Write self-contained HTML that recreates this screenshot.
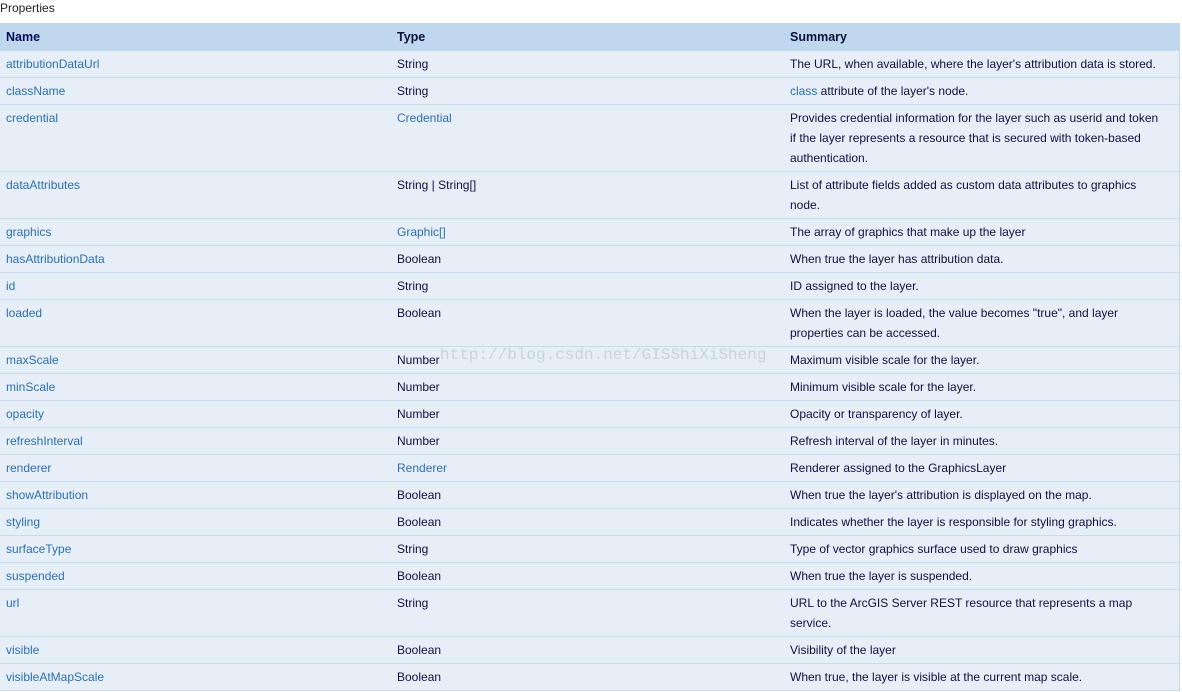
<!DOCTYPE html>
<html><head><meta charset="utf-8"><style>
body{margin:0;background:#fff;font-family:"Liberation Sans",Arial,sans-serif;font-size:12px;width:1182px;height:692px;overflow:hidden;position:relative}
.t{position:absolute;left:0;top:1px;font-size:12px;color:#222}
.tb{position:absolute;left:0;top:23px;width:1179px;border-right:1px solid #c8d6e4}
.r{position:relative;background:#e6eef8;border-bottom:1px solid #cbd9e8;box-sizing:border-box}
.r div{position:absolute;top:3px;line-height:20px;white-space:nowrap}
.h{background:#c0d8ee;height:28px;font-weight:bold;color:#0a0a5a;font-size:12.5px}
.h div{top:4px}
.a{left:6px;color:#2e6fae}
.b{left:397px;color:#10103c}
.b.l{color:#2e6fae}
.c{left:790px;color:#10103c}
.wm{position:absolute;left:440px;top:346px;font-family:"Liberation Mono",monospace;font-size:16px;color:rgba(150,160,175,0.35)}
</style></head><body>
<div class="t">Properties</div>
<div class="tb">
<div class="r h"><div class="a" style="color:#0a0a5a">Name</div><div class="b">Type</div><div class="c">Summary</div></div>
<div class="r" style="height:27px"><div class="a">attributionDataUrl</div><div class="b">String</div><div class="c">The URL, when available, where the layer's attribution data is stored.</div></div>
<div class="r" style="height:27px"><div class="a">className</div><div class="b">String</div><div class="c"><span style="color:#2e6fae">class</span> attribute of the layer's node.</div></div>
<div class="r" style="height:67px"><div class="a">credential</div><div class="b l">Credential</div><div class="c">Provides credential information for the layer such as userid and token<br>if the layer represents a resource that is secured with token-based<br>authentication.</div></div>
<div class="r" style="height:47px"><div class="a">dataAttributes</div><div class="b">String | String[]</div><div class="c">List of attribute fields added as custom data attributes to graphics<br>node.</div></div>
<div class="r" style="height:27px"><div class="a">graphics</div><div class="b l">Graphic[]</div><div class="c">The array of graphics that make up the layer</div></div>
<div class="r" style="height:27px"><div class="a">hasAttributionData</div><div class="b">Boolean</div><div class="c">When true the layer has attribution data.</div></div>
<div class="r" style="height:27px"><div class="a">id</div><div class="b">String</div><div class="c">ID assigned to the layer.</div></div>
<div class="r" style="height:47px"><div class="a">loaded</div><div class="b">Boolean</div><div class="c">When the layer is loaded, the value becomes "true", and layer<br>properties can be accessed.</div></div>
<div class="r" style="height:27px"><div class="a">maxScale</div><div class="b">Number</div><div class="c">Maximum visible scale for the layer.</div></div>
<div class="r" style="height:27px"><div class="a">minScale</div><div class="b">Number</div><div class="c">Minimum visible scale for the layer.</div></div>
<div class="r" style="height:27px"><div class="a">opacity</div><div class="b">Number</div><div class="c">Opacity or transparency of layer.</div></div>
<div class="r" style="height:27px"><div class="a">refreshInterval</div><div class="b">Number</div><div class="c">Refresh interval of the layer in minutes.</div></div>
<div class="r" style="height:27px"><div class="a">renderer</div><div class="b l">Renderer</div><div class="c">Renderer assigned to the GraphicsLayer</div></div>
<div class="r" style="height:27px"><div class="a">showAttribution</div><div class="b">Boolean</div><div class="c">When true the layer's attribution is displayed on the map.</div></div>
<div class="r" style="height:27px"><div class="a">styling</div><div class="b">Boolean</div><div class="c">Indicates whether the layer is responsible for styling graphics.</div></div>
<div class="r" style="height:27px"><div class="a">surfaceType</div><div class="b">String</div><div class="c">Type of vector graphics surface used to draw graphics</div></div>
<div class="r" style="height:27px"><div class="a">suspended</div><div class="b">Boolean</div><div class="c">When true the layer is suspended.</div></div>
<div class="r" style="height:47px"><div class="a">url</div><div class="b">String</div><div class="c">URL to the ArcGIS Server REST resource that represents a map<br>service.</div></div>
<div class="r" style="height:27px"><div class="a">visible</div><div class="b">Boolean</div><div class="c">Visibility of the layer</div></div>
<div class="r" style="height:27px"><div class="a">visibleAtMapScale</div><div class="b">Boolean</div><div class="c">When true, the layer is visible at the current map scale.</div></div>
</div>
<div class="wm">http://blog.csdn.net/GISShiXiSheng</div>
</body></html>
